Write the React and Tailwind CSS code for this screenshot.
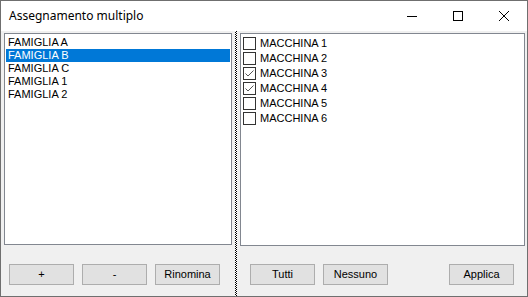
import React from "react";

const famiglie = ["FAMIGLIA A", "FAMIGLIA B", "FAMIGLIA C", "FAMIGLIA 1", "FAMIGLIA 2"];
const macchine = [
  { n: "MACCHINA 1", c: false },
  { n: "MACCHINA 2", c: false },
  { n: "MACCHINA 3", c: true },
  { n: "MACCHINA 4", c: true },
  { n: "MACCHINA 5", c: false },
  { n: "MACCHINA 6", c: false },
];

function Btn({ children }) {
  return (
    <div className="w-[65px] h-[21px] bg-[#e1e1e1] border border-[#adadad] flex items-center justify-center text-[11px] text-black leading-none">
      {children}
    </div>
  );
}

function Check({ checked }) {
  return (
    <div className="w-[13px] h-[13px] border border-[#333333] bg-white flex items-center justify-center shrink-0">
      {checked && (
        <svg width="11" height="11" viewBox="0 0 11 11">
          <path d="M1.5 5.5 L4 8 L9.5 2.5" fill="none" stroke="#555" strokeWidth="1" />
        </svg>
      )}
    </div>
  );
}

export default function App() {
  return (
    <div
      className="w-[528px] h-[297px] border border-[#6f6f6f] bg-[#f0f0f0] flex flex-col overflow-hidden"
      style={{ fontFamily: "'Liberation Sans', Arial, sans-serif" }}
    >
      {/* Title bar */}
      <div className="h-[30px] bg-white flex items-center justify-between shrink-0">
        <div className="pl-2 text-[12px] text-black" style={{ fontFamily: "'Noto Sans', 'Open Sans', sans-serif" }}>
          Assegnamento multiplo
        </div>
        <div className="flex h-full">
          <div className="w-[46px] h-full flex items-center justify-center">
            <div className="w-[10px] h-px bg-black" />
          </div>
          <div className="w-[46px] h-full flex items-center justify-center">
            <div className="w-[10px] h-[10px] border border-black" />
          </div>
          <div className="w-[46px] h-full flex items-center justify-center">
            <svg width="10" height="10" viewBox="0 0 10 10">
              <path d="M0 0 L10 10 M10 0 L0 10" stroke="#000" strokeWidth="1" />
            </svg>
          </div>
        </div>
      </div>

      {/* Body */}
      <div className="flex flex-1 min-h-0">
        {/* Left panel */}
        <div className="w-[234px] flex flex-col pt-[2px]">
          <div className="mx-[3px] h-[212px] border border-[#828790] bg-white pt-[2px] px-px">
            {famiglie.map((f, i) => (
              <div
                key={f}
                className={
                  "h-[13px] pl-[2px] text-[11px] leading-[13px] " +
                  (i === 1 ? "bg-[#0078d7] text-white" : "text-black")
                }
              >
                {f}
              </div>
            ))}
          </div>
          <div className="flex gap-[8px] pl-[8px] mt-[19px]">
            <Btn>+</Btn>
            <Btn>-</Btn>
            <Btn>Rinomina</Btn>
          </div>
        </div>

        {/* Splitter */}
        <div className="w-[2px] bg-[repeating-conic-gradient(#000_0_25%,#fff_0_50%)] bg-[length:2px_2px]" />

        {/* Right panel */}
        <div className="flex-1 flex flex-col pt-[2px]">
          <div className="ml-[3px] mr-[2px] h-[213px] border border-[#828790] bg-white pt-[3px] pl-[2px]">
            {macchine.map((m) => (
              <div key={m.n} className="h-[15px] flex items-start gap-[4px]">
                <Check checked={m.c} />
                <span className="text-[11px] leading-[13px] text-black">{m.n}</span>
              </div>
            ))}
          </div>
          <div className="flex justify-between px-[13px] mt-[18px]">
            <div className="flex gap-[8px]">
              <Btn>Tutti</Btn>
              <Btn>Nessuno</Btn>
            </div>
            <Btn>Applica</Btn>
          </div>
        </div>
      </div>
    </div>
  );
}
